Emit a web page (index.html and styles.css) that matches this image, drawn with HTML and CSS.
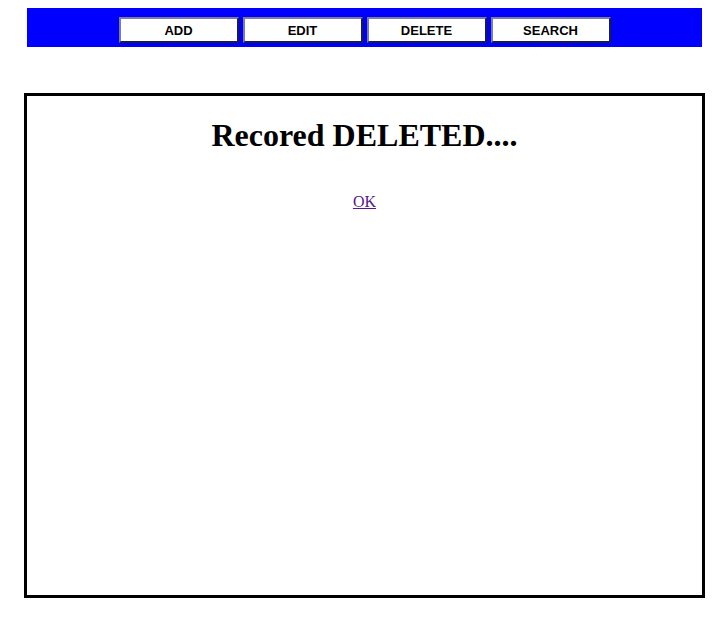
FILE: index.html
```html
<!DOCTYPE html>
<html>
<head>
<meta charset="utf-8">
<link rel="stylesheet" href="styles.css">
</head>
<body>
<div class="bar">
  <button class="btn">ADD</button>
  <button class="btn">EDIT</button>
  <button class="btn">DELETE</button>
  <button class="btn">SEARCH</button>
</div>
<div class="box">
  <h1 class="title">Recored DELETED....</h1>
  <p class="ok"><a href="#" class="oklink">OK</a></p>
</div>
</body>
</html>
```

FILE: styles.css
```css
html, body {
  margin: 0;
  padding: 0;
  background: #fff;
}
body {
  font-family: "Liberation Serif", "Times New Roman", serif;
  font-size: 16px;
}
.bar {
  margin: 8px 0 0 27px;
  width: 675px;
  height: 39px;
  background: #0000ff;
  display: flex;
  justify-content: center;
  align-items: flex-start;
  gap: 4px;
  padding: 9px 0 0 0;
  box-sizing: border-box;
}
.btn {
  width: 120px;
  height: 26px;
  box-sizing: border-box;
  background: #fff;
  border-style: solid;
  border-width: 2px;
  border-color: #7c7c9c #1c1c3c #1c1c3c #7c7c9c;
  font-family: "Liberation Sans", Arial, sans-serif;
  font-weight: bold;
  font-size: 13px;
  color: #000;
  padding: 0;
  margin: 0;
}
.box {
  margin: 46px 0 0 24px;
  width: 681px;
  height: 505px;
  box-sizing: border-box;
  border: 3px solid #000;
  text-align: center;
}
.title {
  font-size: 32px;
  font-weight: bold;
  margin: 21px 0 21px;
}
.ok {
  margin: 39px 0 0;
}
.oklink {
  color: #551a8b;
}
```
